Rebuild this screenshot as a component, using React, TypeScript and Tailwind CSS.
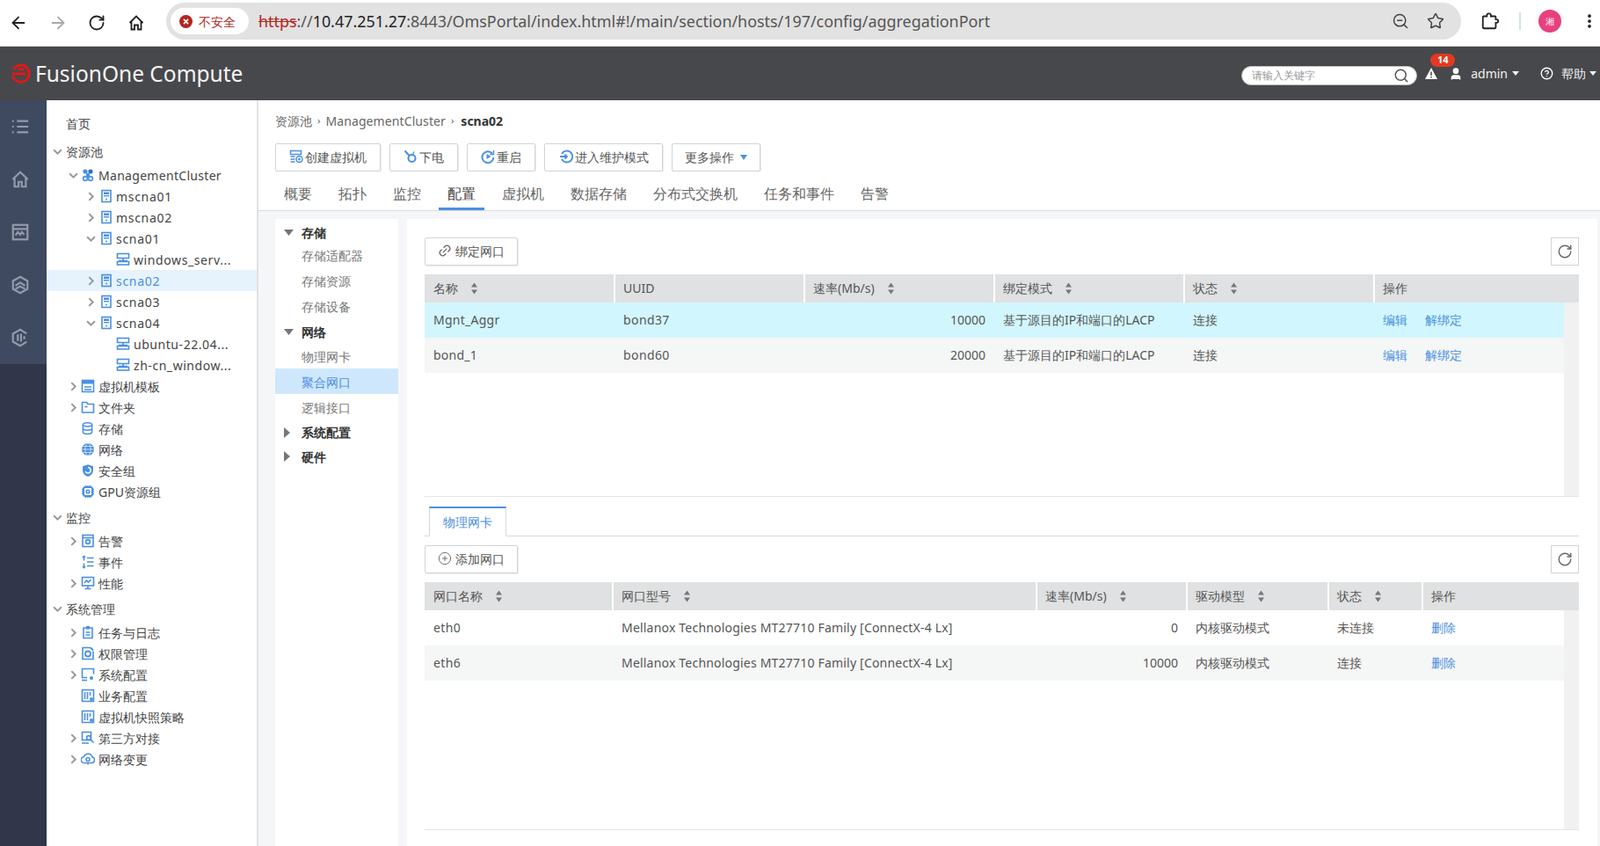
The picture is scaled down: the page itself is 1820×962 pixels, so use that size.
import React from "react";
import { ArrowLeft, ArrowRight, RotateCw, Star, EllipsisVertical, ZoomOut, Search, User, CircleHelp, Link2, CirclePlus } from "lucide-react";

const B = "#4a90e2";

const S = ({ children, c = "w-4 h-4" }: { children: React.ReactNode; c?: string }) => (
  <svg viewBox="0 0 16 16" fill="none" stroke={B} strokeWidth="1.6" className={c}>{children}</svg>
);

const IServer = () => (<S><rect x="3" y="1.5" width="10" height="13" /><rect x="5" y="3.5" width="6" height="2.5" fill={B} stroke="none" /><rect x="5" y="7" width="6" height="1.4" fill={B} stroke="none" /><circle cx="8" cy="11.5" r="1" fill={B} stroke="none" /></S>);
const IVm = () => (<S><rect x="1.5" y="1.5" width="13" height="5" /><path d="M3 9.5h10M8 6.5v3" /><rect x="1.5" y="10.5" width="13" height="3.5" /></S>);
const ICluster = () => (<S><circle cx="5" cy="4" r="2.6" fill={B} stroke="none" /><circle cx="11" cy="4" r="2.6" fill="#2f6fc4" stroke="none" /><circle cx="8" cy="8" r="2.200" fill={B} stroke="none" /><circle cx="5" cy="12" r="2.400" /><circle cx="11" cy="12" r="2.400" /></S>);
const ITemplate = () => (<S><rect x="1.5" y="1.5" width="13" height="13" /><rect x="1.5" y="1.5" width="13" height="4" fill={B} stroke="none" /><path d="M4 9h8M4 12h8" /></S>);
const IFolder = () => (<S><path d="M1.5 2.5h5l1.5 2h6.5v9.5h-13z" /><path d="M4.5 7.5h3" /></S>);
const IDb = () => (<S c="w-[15px] h-4"><ellipse cx="8" cy="3.5" rx="5.5" ry="2.3" /><path d="M2.5 3.5v9c0 1.3 2.5 2.3 5.5 2.3s5.5-1 5.5-2.3v-9M2.5 8c0 1.3 2.5 2.3 5.5 2.3s5.5-1 5.5-2.3" /></S>);
const IGlobe = () => (<S><circle cx="8" cy="8" r="7" fill={B} stroke="none" /><g stroke="#cfe3fa" strokeWidth="0.9"><ellipse cx="8" cy="8" rx="3.2" ry="7" /><path d="M1 8h14M2 4.5h12M2 11.5h12" /></g></S>);
const IShield = () => (<S><path d="M8 1.2l6 2v4.5c0 3.8-3 6.2-6 7.2-3-1-6-3.4-6-7.2V3.200z" fill={B} stroke="none" /><path d="M8 4.5a3.200 3.200 0 1 1-3 4.500" stroke="#fff" /></S>);
const IGpu = () => (<S><rect x="3" y="3" width="10" height="10" rx="2" strokeWidth="2" /><circle cx="8" cy="8" r="1.800" /><path d="M5.500 1v2M8 1v2M10.500 1v2M5.500 13v2M8 13v2M10.500 13v2M1 5.500h2M1 8h2M1 10.500h2M13 5.500h2M13 8h2M13 10.500h2" /></S>);
const IAlarm = () => (<S><rect x="2" y="1.500" width="12" height="13" /><path d="M2 4.500h12" /><circle cx="8" cy="9" r="2.400" /></S>);
const IEvents = () => (<S><path d="M7 3.500h7.500M7 8h7.500M7 12.500h7.500" /><path d="M3.500 1.500v5M3.500 9.500v5" /><path d="M2 3l1.500-1.500L5 3M2 13l1.500 1.500L5 13" /></S>);
const IPerf = () => (<S><rect x="1.500" y="1.500" width="13" height="9.500" /><path d="M4 8l2.500-3 2 2 3-3" /><path d="M8 11v3M4.500 14.500h7" /></S>);
const ITask = () => (<S><path d="M3 3h10v11.500H3z" /><rect x="6" y="1" width="4" height="3.500" fill={B} stroke="none" /><path d="M5.500 8h5M5.500 11h5" /></S>);
const IPerm = () => (<S><path d="M14 5.500v9H2v-13h9" /><circle cx="8" cy="8.500" r="3" strokeWidth="1.800" /><path d="M11 1.500l3 3" strokeWidth="1.800" /></S>);
const ISys = () => (<S><path d="M7 11.500H1.500v-10h13v6" /><path d="M1 14.500h6" /><circle cx="12" cy="12" r="2" fill={B} stroke="none" /></S>);
const IBiz = () => (<S><rect x="1.500" y="1.500" width="13" height="13" /><path d="M4.500 4v8M7.500 4v8M10.500 4v4" strokeWidth="1.600" /><circle cx="12" cy="12" r="2" fill={B} stroke="none" /></S>);
const IThird = () => (<S><rect x="1.500" y="1.500" width="10" height="9" /><circle cx="9" cy="8" r="2.400" /><path d="M11 10l3.500 3.500M1 14h8" /></S>);
const INet = () => (<S><path d="M4 12.500a3.500 3.500 0 0 1-.5-7 5 5 0 0 1 9.500.5 3.300 3.300 0 0 1-1 6.500z" /><circle cx="8" cy="8.500" r="2" /><path d="M8 12.500v2" /></S>);

const Chevron = ({ open }: { open: boolean }) => (
  <svg viewBox="0 0 10 10" className="w-[11px] h-[11px]" fill="none" stroke="#999" strokeWidth="1.800">
    {open ? <path d="M1 3l4 4 4-4" /> : <path d="M3 1l4 4-4 4" />}
  </svg>
);

type Row = { t: string; l: number; ch?: "o" | "c"; i?: React.ReactNode; sel?: boolean; tr?: string };

const tree1: Row[] = [
  { t: "ManagementCluster", l: 1, ch: "o", i: <ICluster />, tr: "tracking-[0.3px]" },
  { t: "mscna01", l: 2, ch: "c", i: <IServer />, tr: "tracking-[0.7px]" },
  { t: "mscna02", l: 2, ch: "c", i: <IServer />, tr: "tracking-[0.7px]" },
  { t: "scna01", l: 2, ch: "o", i: <IServer />, tr: "tracking-[0.7px]" },
  { t: "windows_serv...", l: 3, i: <IVm />, tr: "tracking-[0.6px]" },
  { t: "scna02", l: 2, ch: "c", i: <IServer />, sel: true, tr: "tracking-[0.7px]" },
  { t: "scna03", l: 2, ch: "c", i: <IServer />, tr: "tracking-[0.7px]" },
  { t: "scna04", l: 2, ch: "o", i: <IServer />, tr: "tracking-[0.7px]" },
  { t: "ubuntu-22.04...", l: 3, i: <IVm />, tr: "tracking-[0.55px]" },
  { t: "zh-cn_window...", l: 3, i: <IVm />, tr: "tracking-[0.55px]" },
  { t: "虚拟机模板", l: 1, ch: "c", i: <ITemplate /> },
  { t: "文件夹", l: 1, ch: "c", i: <IFolder /> },
  { t: "存储", l: 1, i: <IDb /> },
  { t: "网络", l: 1, i: <IGlobe /> },
  { t: "安全组", l: 1, i: <IShield /> },
  { t: "GPU资源组", l: 1, i: <IGpu /> },
];
const tree2: Row[] = [
  { t: "告警", l: 1, ch: "c", i: <IAlarm /> },
  { t: "事件", l: 1, i: <IEvents /> },
  { t: "性能", l: 1, ch: "c", i: <IPerf /> },
];
const tree3: Row[] = [
  { t: "任务与日志", l: 1, ch: "c", i: <ITask /> },
  { t: "权限管理", l: 1, ch: "c", i: <IPerm /> },
  { t: "系统配置", l: 1, ch: "c", i: <ISys /> },
  { t: "业务配置", l: 1, i: <IBiz /> },
  { t: "虚拟机快照策略", l: 1, i: <IBiz /> },
  { t: "第三方对接", l: 1, ch: "c", i: <IThird /> },
  { t: "网络变更", l: 1, ch: "c", i: <INet /> },
];

const levelPad: Record<number, string> = { 1: "pl-[25px]", 2: "pl-[45px]", 3: "pl-[79px]" };
const chevW: Record<number, string> = { 1: "w-[14px]", 2: "w-[15px]", 3: "w-0" };
const iconW: Record<number, string> = { 1: "w-[20px]", 2: "w-[19px]", 3: "w-[20px]" };

const TreeRow = ({ r }: { r: Row }) => (
  <div className={`flex items-center h-6 ${levelPad[r.l]} ${r.sel ? "bg-[#e6f3fd] text-[#4a90e2]" : "text-[#444]"}`}>
    <span className={`${chevW[r.l]} flex items-center shrink-0`}>{r.ch ? <Chevron open={r.ch === "o"} /> : null}</span>
    <span className={`${iconW[r.l]} flex items-center shrink-0`}>{r.i}</span>
    <span className={`whitespace-nowrap ${r.tr ?? ""}`}>{r.t}</span>
  </div>
);

const Section = ({ t, mt }: { t: string; mt: string }) => (
  <div className={`flex items-center h-6 pl-[7px] text-[#444] ${mt}`}>
    <span className="w-[15px] flex items-center shrink-0"><Chevron open /></span>
    <span>{t}</span>
  </div>
);

const Tree = () => (
  <div className="w-[241px] shrink-0 border-r-2 border-[#dfe1e3] bg-white text-[14px] pt-[14px]">
    <div className="flex items-center h-6 pl-[22px] text-[#444]">首页</div>
    <Section t="资源池" mt="mt-2" />
    <div className="mt-[3px]">{tree1.map((r) => <TreeRow key={r.t} r={r} />)}</div>
    <Section t="监控" mt="mt-[5px]" />
    <div className="mt-[3px]">{tree2.map((r) => <TreeRow key={r.t} r={r} />)}</div>
    <Section t="系统管理" mt="mt-[5px]" />
    <div className="mt-[3px]">{tree3.map((r) => <TreeRow key={r.t} r={r} />)}</div>
  </div>
);

const RailIcon = ({ children }: { children: React.ReactNode }) => (
  <div className="h-[60px] pr-[7px] flex items-center justify-center">
    <svg viewBox="0 0 24 24" className="w-[22px] h-[22px]" fill="none" stroke="#929aab" strokeWidth="2.400">{children}</svg>
  </div>
);

const Rail = () => (
  <div className="w-[53px] shrink-0 flex flex-col bg-[#32364a]">
    <div className="bg-[#3f4a61]">
      <RailIcon><path d="M8 5h14M8 12h14M8 19h14M2 5h2M2 12h2M2 19h2" /></RailIcon>
      <RailIcon><path d="M2.500 12L12 3l9.500 9M5 10v11h5v-6h4v6h5V10" /></RailIcon>
      <RailIcon><rect x="3" y="3" width="18" height="18" /><path d="M3 8h18M6 16l3-4 3 3 2-3 3 3" /></RailIcon>
      <RailIcon><path d="M12 2l9 5v10l-9 5-9-5V7z" /><path d="M6 13l6-4 6 4M6 17l6-3 6 3" /></RailIcon>
      <RailIcon><path d="M20 7l-8-5-9 5v10l9 5 8-5" /><path d="M9 8v8M13 7v10M17 10v4" /></RailIcon>
    </div>
  </div>
);

const Sort = () => (
  <svg viewBox="0 0 8 14" className="w-[9px] h-[14px] ml-[14px] mt-[2px] shrink-0" fill="#777">
    <path d="M4 0.500L7.500 5.500H0.500zM4 13.500L0.500 8.500H7.500z" />
  </svg>
);

const Btn = ({ children, w }: { children: React.ReactNode; w: string }) => (
  <div className={`h-8 ${w} border border-[#d0d4d7] rounded-[2px] shadow-[1px_1px_1px_rgba(0,0,0,0.08)] flex items-center justify-center gap-[2px] bg-white text-[14px] text-[#555] whitespace-nowrap pb-[2px]`}>{children}</div>
);

const RefreshBtn = () => (
  <div className="w-8 h-8 border border-[#d0d4d7] flex items-center justify-center bg-white">
    <RotateCw className="w-[18px] h-[18px] text-[#666]" strokeWidth={1.800} />
  </div>
);

const Th = ({ t, sort = true }: { t: string; sort?: boolean }) => (
  <div className="flex items-center pl-[9px] first:pl-[10px] pb-[2px] border-l-2 border-white first:border-l-0 text-[#555] whitespace-nowrap">
    <span>{t}</span>{sort ? <Sort /> : null}
  </div>
);

const Td = ({ children, right, tr = "" }: { children: React.ReactNode; right?: boolean; tr?: string }) => (
  <div className={`flex items-center whitespace-nowrap pb-[2px] ${tr} ${right ? "justify-end pr-[10px]" : "pl-[10px]"}`}>{children}</div>
);

const L = ({ children }: { children: React.ReactNode }) => <span className="text-[#4a90e2]">{children}</span>;

const Main = () => (
  <div className="flex-1 min-w-0 flex flex-col">
    <div className="bg-white pl-[19px] pt-[14px]">
      <div className="h-5 pb-[2px] flex items-center text-[14px] text-[#666] gap-[6px]">
        <span>资源池</span><span className="text-[11px]">›</span><span className="tracking-[0.1px]">ManagementCluster</span><span className="text-[11px]">›</span><span className="font-bold text-[#333] ml-[2px]">scna02</span>
      </div>
      <div className="mt-[15px] flex gap-[10px]">
        <Btn w="w-[120px]"><svg viewBox="0 0 16 16" className="w-4 h-4" fill="none" stroke={B} strokeWidth="1.500"><rect x="1.500" y="1.500" width="12" height="4" /><path d="M1.500 8h5M1.500 11h5M1.500 14h5" /><circle cx="11.500" cy="11" r="3.500" /><path d="M10 11h3M11.500 9.500v3" /></svg>创建虚拟机</Btn>
        <Btn w="w-[78px]"><svg viewBox="0 0 16 16" className="w-4 h-4" fill="none" stroke={B} strokeWidth="2.100"><path d="M1.500 1.500l5.500 6" /><circle cx="9.500" cy="10" r="4" /><path d="M12 2.500l-1.500 3" strokeWidth="1.400" /></svg>下电</Btn>
        <Btn w="w-[78px]"><svg viewBox="0 0 16 16" className="w-4 h-4" fill="none" stroke={B} strokeWidth="2"><path d="M13 4.500A6.500 6.500 0 1 0 14.500 9" /><path d="M6.500 5l5 3-5 3z" fill={B} stroke="none" /><path d="M14.500 1v4.500H10" strokeWidth="1.500" /></svg>重启</Btn>
        <Btn w="w-[135px]"><svg viewBox="0 0 16 16" className="w-4 h-4" fill="none" stroke={B} strokeWidth="1.800"><path d="M3 5a6.500 6.500 0 1 1 0 6" /><path d="M1 8h8M6.500 5.500L9 8l-2.500 2.500" /></svg>进入维护模式</Btn>
        <Btn w="w-[101px]">更多操作<svg viewBox="0 0 8 6" className="w-2 h-[6px] ml-[5px] mt-[2px]" fill={B}><path d="M0 0h8L4 6z" /></svg></Btn>
      </div>
    </div>
    <div className="bg-white pl-[19px] pt-[4px] h-[45px] border-b border-[#d8dbdd] flex gap-[10px] text-[16px] text-[#666]">
      {["概要", "拓扑", "监控", "配置", "虚拟机", "数据存储", "分布式交换机", "任务和事件", "告警"].map((t) => (
        <div key={t} className={`h-10 px-[10px] pt-[5px] flex items-center border-b-[3px] whitespace-nowrap ${t === "配置" ? "border-[#4a90e2] text-[#444]" : "border-transparent"}`}>{t}</div>
      ))}
    </div>
    <div className="flex-1 min-h-0 bg-[#f4f6f8] pl-[19px] pr-[3px] pt-[9px] flex gap-[10px]">
      <div className="w-[140px] shrink-0 bg-white pt-[2px] text-[14px]">
        {[
          { h: "存储", open: true, items: ["存储适配器", "存储资源", "存储设备"] },
          { h: "网络", open: true, items: ["物理网卡", "聚合网口", "逻辑接口"] },
          { h: "系统配置", open: false, items: [] },
          { h: "硬件", open: false, items: [] },
        ].map((g, idx) => (
          <div key={g.h}>
            <div className={`h-[25px] pl-[10px] flex items-center font-semibold text-[#333] ${idx ? "mt-[2px]" : ""} ${idx === 0 || idx === 3 ? "pt-[1px]" : ""}`}>
              <span className="w-5 shrink-0 flex items-center">
                {g.open
                  ? <svg viewBox="0 0 11 7" className="w-[11px] h-[7px]" fill="#777"><path d="M0 0h11L5.500 7z" /></svg>
                  : <svg viewBox="0 0 7 12" className="w-[7px] h-3" fill="#777"><path d="M0 0l7 6-7 6z" /></svg>}
              </span>
              {g.h}
            </div>
            {g.items.map((t) => (
              <div key={t} className={`h-[29px] pl-[30px] flex items-center ${idx === 1 ? "pt-[1px]" : ""} ${t === "聚合网口" ? "bg-[#cfe7fd] text-[#4a90e2]" : "text-[#777]"}`}>{t}</div>
            ))}
          </div>
        ))}
      </div>
      <div className="flex-1 min-w-0 bg-white pl-5 pr-[21px] pt-[21px] flex flex-col text-[14px] text-[#555]">
        <div className="flex justify-between">
          <Btn w="w-[106px]"><Link2 className="w-4 h-4 -rotate-45 text-[#666] mr-[2px]" />绑定网口</Btn>
          <RefreshBtn />
        </div>
        <div className="mt-[10px] h-[32px] bg-[#dfe1e2] grid grid-cols-[215px_216px_216px_216px_216px_234px]">
          <Th t="名称" /><Th t="UUID" sort={false} /><Th t="速率(Mb/s)" /><Th t="绑定模式" /><Th t="状态" /><Th t="操作" sort={false} />
        </div>
        <div className="h-[221px] flex border-b border-[#e3e5e6] shrink-0">
          <div className="w-[1296px] shrink-0">
            {[
              { a: "Mgnt_Aggr", b: "bond37", r: "10000", bg: "bg-[#d2f6fd]" },
              { a: "bond_1", b: "bond60", r: "20000", bg: "bg-[#f5f6f6]" },
            ].map((x) => (
              <div key={x.a} className={`h-10 grid grid-cols-[216px_216px_216px_216px_216px_216px] ${x.bg}`}>
                <Td tr="tracking-[0.25px]">{x.a}</Td><Td tr="tracking-[0.4px]">{x.b}</Td><Td right>{x.r}</Td><Td>基于源目的IP和端口的LACP</Td><Td>连接</Td>
                <Td><L>编辑</L><span className="ml-[20px]"><L>解绑定</L></span></Td>
              </div>
            ))}
          </div>
          <div className="w-[17px] bg-[#f1f1f1]" />
        </div>
        <div className="mt-[11px] h-[34px] border-b border-[#d5d8da] pl-[5px] shrink-0">
          <div className="w-[88px] h-[34px] border border-[#d5d8da] border-t-2 border-t-[#4a90e2] border-b-white bg-white flex items-center justify-center text-[#4a90e2]">物理网卡</div>
        </div>
        <div className="mt-[10px] flex justify-between">
          <Btn w="w-[106px]"><CirclePlus className="w-4 h-4 text-[#666] mr-[2px]" strokeWidth={1.400} />添加网口</Btn>
          <RefreshBtn />
        </div>
        <div className="mt-[10px] h-[32px] bg-[#dfe1e2] grid grid-cols-[213px_482px_171px_161px_107px_179px]">
          <Th t="网口名称" /><Th t="网口型号" /><Th t="速率(Mb/s)" /><Th t="驱动模型" /><Th t="状态" /><Th t="操作" sort={false} />
        </div>
        <div className="h-[250px] flex border-b border-[#e3e5e6] shrink-0">
          <div className="w-[1296px] shrink-0">
            {[
              { a: "eth0", r: "0", s: "未连接", bg: "bg-white" },
              { a: "eth6", r: "10000", s: "连接", bg: "bg-[#f5f6f6]" },
            ].map((x) => (
              <div key={x.a} className={`h-10 grid grid-cols-[214px_482px_171px_161px_107px_161px] ${x.bg}`}>
                <Td tr="tracking-[0.4px]">{x.a}</Td><Td tr="tracking-[0.2px]">Mellanox Technologies MT27710 Family [ConnectX-4 Lx]</Td><Td right>{x.r}</Td><Td>内核驱动模式</Td><Td>{x.s}</Td><Td><L>删除</L></Td>
              </div>
            ))}
          </div>
          <div className="w-[17px] bg-[#f1f1f1]" />
        </div>
      </div>
    </div>
  </div>
);

const BrowserBar = () => (
  <div className="h-[53px] shrink-0 bg-white flex items-center border-b border-[#d9d9d9] text-[#333]">
    <div className="w-[189px] shrink-0 flex items-center pl-[10px] gap-[23px]">
      <ArrowLeft className="w-[22px] h-[22px] text-[#222]" strokeWidth={2} />
      <ArrowRight className="w-[22px] h-[22px] text-[#aaa]" strokeWidth={2} />
      <RotateCw className="w-[20px] h-[20px] text-[#222]" strokeWidth={2.200} />
      <svg viewBox="0 0 20 20" className="w-[20px] h-[20px] ml-[2px]" fill="none" stroke="#222" strokeWidth="1.800"><path d="M2.500 10L10 2.500 17.500 10M4.500 8.500V17.500H8V12.500h4V17.500h3.500V8.500" /></svg>
    </div>
    <div className="w-[1473px] h-[42px] -mt-[4px] rounded-[21px] bg-[#e2e2e2] flex items-center pl-[5px] pr-[19px]">
      <div className="h-[30px] w-[89px] bg-white rounded-[15px] flex items-center pl-[10px] gap-[7px] text-[14px] text-[#b3261e] shrink-0">
        <svg viewBox="0 0 16 16" className="w-[15px] h-[15px]"><circle cx="8" cy="8" r="8" fill="#b3261e" /><path d="M5.300 5.300l5.400 5.400M10.700 5.300l-5.400 5.400" stroke="#fff" strokeWidth="1.800" /></svg>
        不安全
      </div>
      <div className="ml-[11px] text-[17.9px] text-[#555] whitespace-nowrap flex-1"><span className="line-through text-[#b3261e]">https</span>://<span className="text-[#222]">10.47.251.27</span>:8443/OmsPortal/index.html#!/main/section/hosts/197/config/aggregationPort</div>
      <ZoomOut className="w-[20px] h-[20px] text-[#444]" strokeWidth={1.800} />
      <Star className="w-[20px] h-[20px] text-[#444] ml-[20px]" strokeWidth={1.800} />
    </div>
    <div className="flex-1 flex items-center -mt-[4px] pl-[22px]">
      <svg viewBox="0 0 24 24" className="w-[22px] h-[22px]" fill="none" stroke="#222" strokeWidth="2"><path d="M4 6h4V5a2.500 2.500 0 0 1 5 0v1h5a1 1 0 0 1 1 1v3h1a2 2 0 0 1 0 4h-1v6a1 1 0 0 1-1 1H4a1 1 0 0 1-1-1V7a1 1 0 0 1 1-1z" /></svg>
      <div className="w-[2px] h-[20px] bg-[#cfe8cf] ml-[22px]" />
      <div className="ml-[20px] w-[26px] h-[26px] rounded-full bg-[#e8407f] text-white text-[10px] flex items-center justify-center">湘</div>
      <EllipsisVertical className="w-[20px] h-[20px] text-[#222] ml-[22px]" strokeWidth={2.500} />
    </div>
  </div>
);

const Header = () => (
  <div className="h-[61px] shrink-0 bg-[#47484b] flex items-center text-white">
    <svg viewBox="0 0 24 24" className="w-[23px] h-[23px] ml-[12px] shrink-0" fill="none" stroke="#e01818" strokeWidth="3"><path d="M3.500 7a10 10 0 1 1-1 8" /><path d="M16 8.500a4.500 4.500 0 0 0-7-.5M1.500 12.500h17" /></svg>
    <span className="ml-[5px] pt-[2px] text-[24.5px] text-[#f4f4f4] whitespace-nowrap">FusionOne Compute</span>
    <div className="ml-auto flex items-center pr-[4px]">
      <div className="w-[200px] h-[22px] mt-[5px] bg-white rounded-[11px] border border-[#bbb] flex items-center pl-[11px] pr-[8px] text-[12px] text-[#999]">
        <span className="flex-1">请输入关键字</span>
        <Search className="w-[18px] h-[18px] text-[#555]" strokeWidth={2} />
      </div>
      <div className="relative ml-[9px] w-[14px] flex items-center">
        <svg viewBox="0 0 14 13" className="w-[14px] h-[13px]"><path d="M7 0l7 13H0z" fill="#fff" /><path d="M7 4.500v4.500M7 10v1.500" stroke="#47484b" strokeWidth="1.500" /></svg>
        <span className="absolute left-[6px] -top-[16px] w-[28px] h-[15px] rounded-[8px] bg-[#e23a22] text-white text-[11px] font-bold flex items-center justify-center">14</span>
      </div>
      <User className="w-[16px] h-[16px] ml-[13px] text-white" fill="#fff" />
      <span className="ml-[9px] text-[14px] text-[#f0f0f0]">admin</span>
      <svg viewBox="0 0 8 5" className="w-2 h-[5px] ml-[5px]" fill="#f0f0f0"><path d="M0 0h8L4 5z" /></svg>
      <CircleHelp className="w-[15px] h-[15px] ml-[24px] text-white" strokeWidth={2.200} />
      <span className="ml-[9px] text-[14px] text-[#f0f0f0]">帮助</span>
      <svg viewBox="0 0 8 5" className="w-2 h-[5px] ml-[4px]" fill="#f0f0f0"><path d="M0 0h8L4 5z" /></svg>
    </div>
  </div>
);

export default function App() {
  return (
    <div className="w-[1820px] h-[962px] overflow-hidden flex flex-col bg-white font-['Noto_Sans','Noto_Sans_CJK_SC',sans-serif]">
      <BrowserBar />
      <Header />
      <div className="flex-1 min-h-0 flex">
        <Rail />
        <Tree />
        <Main />
      </div>
    </div>
  );
}
